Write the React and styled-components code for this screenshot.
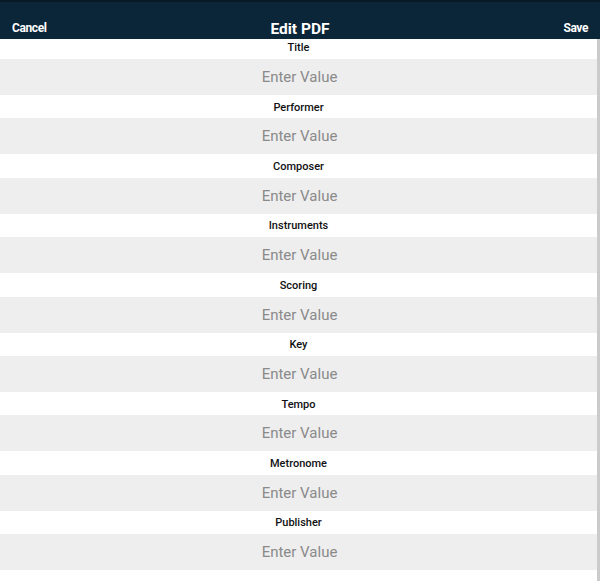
import React from "react";
import styled, { createGlobalStyle } from "styled-components";

const Global = createGlobalStyle`
  html, body { margin: 0; padding: 0; background: #ffffff; }
  body { font-family: Roboto, "Liberation Sans", Arial, sans-serif; overflow: hidden; }
  * { box-sizing: border-box; }
`;

const Page = styled.div`
  width: 600px;
  height: 581px;
  display: flex;
  flex-direction: column;
  background: #fff;
`;

const Header = styled.header`
  height: 39px;
  flex: none;
  display: grid;
  grid-template-columns: 1fr auto 1fr;
  align-items: end;
  padding: 0 12px 1px 12px;
  background: #0b2638;
  border-top: 2px solid #071a25;
  color: #fff;
`;

const HeaderButton = styled.button`
  justify-self: ${(p) => (p.$right ? "end" : "start")};
  background: none;
  border: 0;
  padding: 0;
  color: #fff;
  font-family: Roboto, "Liberation Sans", sans-serif;
  font-weight: 700;
  font-size: 12px;
  line-height: 14px;
  letter-spacing: -0.4px;
  margin-bottom: 3px;
`;

const Title = styled.h1`
  margin: 0;
  font-family: Roboto, "Liberation Sans", sans-serif;
  font-weight: 700;
  font-size: 15.5px;
  line-height: 18px;
`;

const Body = styled.div`
  flex: 1;
  display: flex;
  min-height: 0;
`;

const List = styled.div`
  flex: 1;
  display: flex;
  flex-direction: column;
`;

const Scrollbar = styled.div`
  width: 3px;
  flex: none;
  background: #cbcbcb;
`;

const Label = styled.div`
  height: ${(p) => (p.$first ? "20px" : "23.4px")};
  display: flex;
  align-items: center;
  justify-content: center;
  padding-top: ${(p) => (p.$first ? "0" : "1px")};
  padding-bottom: ${(p) => (p.$first ? "4px" : "0")};
  font-family: Roboto, "Liberation Sans", sans-serif;
  font-weight: 500;
  font-size: 11px;
  color: #111;
`;

const Input = styled.input`
  height: 36px;
  width: 100%;
  border: 0;
  outline: none;
  background: #eeeeee;
  text-align: center;
  font-family: Roboto, "Liberation Sans", sans-serif;
  font-weight: 400;
  font-size: 15px;
  color: #333;
  padding: 0 0 0 2px;
  &::placeholder { color: #8a8a8a; opacity: 1; }
`;

const fields = [
  "Title",
  "Performer",
  "Composer",
  "Instruments",
  "Scoring",
  "Key",
  "Tempo",
  "Metronome",
  "Publisher",
];

export default function App() {
  return (
    <Page>
      <Global />
      <Header>
        <HeaderButton>Cancel</HeaderButton>
        <Title>Edit PDF</Title>
        <HeaderButton $right>Save</HeaderButton>
      </Header>
      <Body>
        <List>
          {fields.map((f, i) => (
            <React.Fragment key={f}>
              <Label $first={i === 0}>{f}</Label>
              <Input placeholder="Enter Value" />
            </React.Fragment>
          ))}
        </List>
        <Scrollbar />
      </Body>
    </Page>
  );
}
